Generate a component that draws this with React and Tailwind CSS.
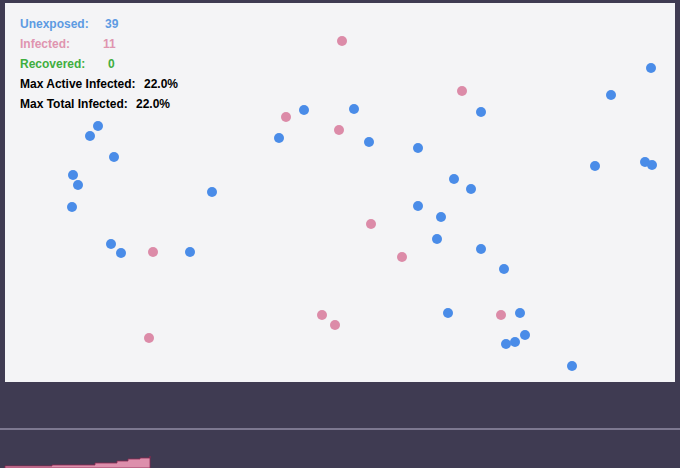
import React from "react";

const blue = [
  [98,126],[90,136],[114,157],[73,175],[78,185],[72,207],[212,192],[111,244],[121,253],[190,252],
  [304,110],[279,138],[354,109],[369,142],[418,148],[481,112],[611,95],[651,68],[595,166],[645,162],
  [652,165],[454,179],[471,189],[418,206],[441,217],[437,239],[481,249],[504,269],[448,313],[520,313],
  [525,335],[515,342],[506,344],[572,366],
];
const pink = [
  [342,41],[462,91],[286,117],[339,130],[371,224],[402,257],[153,252],[322,315],[335,325],[501,315],[149,338],
];

function Dot({ x, y, c }) {
  return (
    <div
      className={`absolute w-[10px] h-[10px] rounded-full ${c}`}
      style={{ left: x - 5 - 5, top: y - 5 - 3 }}
    />
  );
}

export default function App() {
  const font = { fontFamily: '"Liberation Sans", Arial, sans-serif' };
  return (
    <div className="w-[680px] h-[468px] bg-[#3f3b52] flex flex-col overflow-hidden" style={font}>
      <div className="relative mx-[5px] mt-[3px] h-[379px] bg-[#f4f4f6] overflow-hidden">
        {blue.map(([x, y], i) => (
          <Dot key={"b" + i} x={x} y={y} c="bg-[#4a8ce8]" />
        ))}
        {pink.map(([x, y], i) => (
          <Dot key={"p" + i} x={x} y={y} c="bg-[#dc8ba8]" />
        ))}
        <div className="relative pl-[15px] pt-[11px] flex flex-col text-[12px] leading-[20px] font-bold">
          <div className="flex text-[#5d9be2]"><span className="w-[85px]">Unexposed:</span><span>39</span></div>
          <div className="flex text-[#e095b0]"><span className="w-[83px]">Infected:</span><span>11</span></div>
          <div className="flex text-[#3fae3f]"><span className="w-[88px]">Recovered:</span><span>0</span></div>
          <div className="flex text-black"><span className="w-[124px]">Max Active Infected:</span><span>22.0%</span></div>
          <div className="flex text-black"><span className="w-[116px]">Max Total Infected:</span><span>22.0%</span></div>
        </div>
      </div>
      <div className="h-[46px]" />
      <div className="h-[2px] bg-[#7d7890]" />
      <div className="flex-1 relative">
        <svg width="680" height="38" className="block">
          <path
            d="M5 38 L5 36 L52 36 L52 35 L95 35 L95 33 L117 33 L117 31 L128 31 L128 29 L140 29 L140 28 L150 28 L150 26 L150 38 Z"
            fill="#dd8fac"
            stroke="#8b2a50"
            strokeWidth="0.8"
          />
        </svg>
      </div>
    </div>
  );
}
